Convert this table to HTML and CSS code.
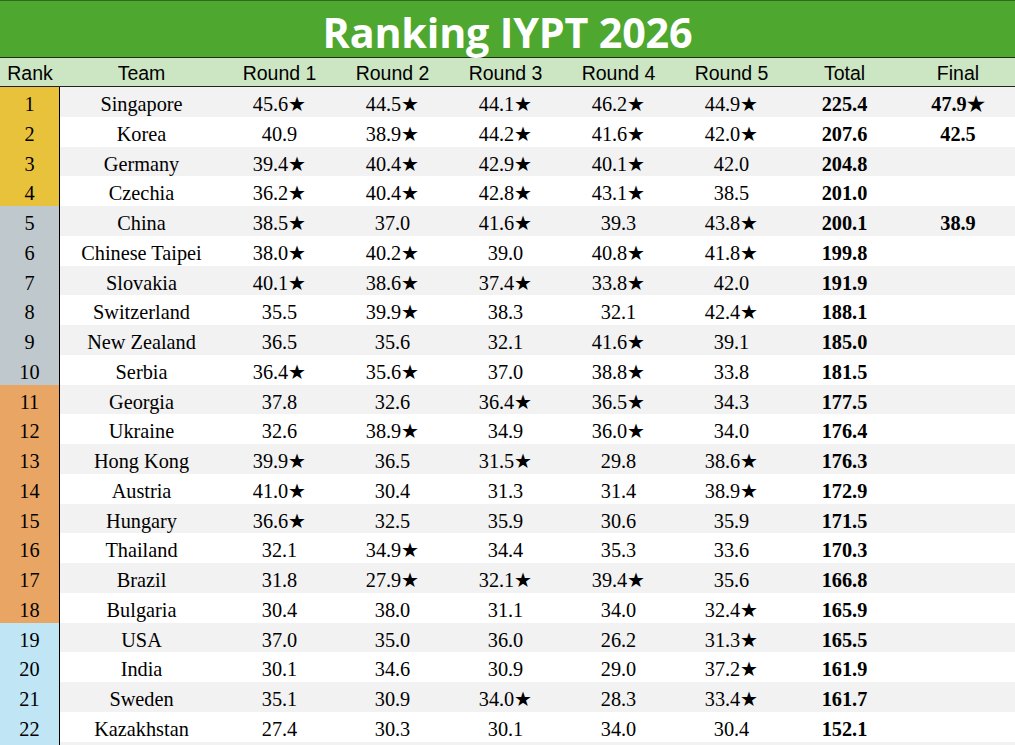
FILE: index.html
```html
<!DOCTYPE html>
<html>
<head>
<meta charset="utf-8">
<link rel="stylesheet" href="styles.css">
</head>
<body>
<div class="sheet">
  <div class="title">Ranking IYPT 2026</div>
  <div class="row head">
    <div>Rank</div><div>Team</div><div>Round 1</div><div>Round 2</div><div>Round 3</div><div>Round 4</div><div>Round 5</div><div>Total</div><div>Final</div>
  </div>
  <div class="row odd"><div class="rank gold">1</div><div>Singapore</div><div>45.6★</div><div>44.5★</div><div>44.1★</div><div>46.2★</div><div>44.9★</div><div class="b">225.4</div><div class="b">47.9★</div></div>
  <div class="row"><div class="rank gold">2</div><div>Korea</div><div>40.9</div><div>38.9★</div><div>44.2★</div><div>41.6★</div><div>42.0★</div><div class="b">207.6</div><div class="b">42.5</div></div>
  <div class="row odd"><div class="rank gold">3</div><div>Germany</div><div>39.4★</div><div>40.4★</div><div>42.9★</div><div>40.1★</div><div>42.0</div><div class="b">204.8</div><div class="b"></div></div>
  <div class="row"><div class="rank gold">4</div><div>Czechia</div><div>36.2★</div><div>40.4★</div><div>42.8★</div><div>43.1★</div><div>38.5</div><div class="b">201.0</div><div class="b"></div></div>
  <div class="row odd"><div class="rank silver">5</div><div>China</div><div>38.5★</div><div>37.0</div><div>41.6★</div><div>39.3</div><div>43.8★</div><div class="b">200.1</div><div class="b">38.9</div></div>
  <div class="row"><div class="rank silver">6</div><div>Chinese Taipei</div><div>38.0★</div><div>40.2★</div><div>39.0</div><div>40.8★</div><div>41.8★</div><div class="b">199.8</div><div class="b"></div></div>
  <div class="row odd"><div class="rank silver">7</div><div>Slovakia</div><div>40.1★</div><div>38.6★</div><div>37.4★</div><div>33.8★</div><div>42.0</div><div class="b">191.9</div><div class="b"></div></div>
  <div class="row"><div class="rank silver">8</div><div>Switzerland</div><div>35.5</div><div>39.9★</div><div>38.3</div><div>32.1</div><div>42.4★</div><div class="b">188.1</div><div class="b"></div></div>
  <div class="row odd"><div class="rank silver">9</div><div>New Zealand</div><div>36.5</div><div>35.6</div><div>32.1</div><div>41.6★</div><div>39.1</div><div class="b">185.0</div><div class="b"></div></div>
  <div class="row"><div class="rank silver">10</div><div>Serbia</div><div>36.4★</div><div>35.6★</div><div>37.0</div><div>38.8★</div><div>33.8</div><div class="b">181.5</div><div class="b"></div></div>
  <div class="row odd"><div class="rank bronze">11</div><div>Georgia</div><div>37.8</div><div>32.6</div><div>36.4★</div><div>36.5★</div><div>34.3</div><div class="b">177.5</div><div class="b"></div></div>
  <div class="row"><div class="rank bronze">12</div><div>Ukraine</div><div>32.6</div><div>38.9★</div><div>34.9</div><div>36.0★</div><div>34.0</div><div class="b">176.4</div><div class="b"></div></div>
  <div class="row odd"><div class="rank bronze">13</div><div>Hong Kong</div><div>39.9★</div><div>36.5</div><div>31.5★</div><div>29.8</div><div>38.6★</div><div class="b">176.3</div><div class="b"></div></div>
  <div class="row"><div class="rank bronze">14</div><div>Austria</div><div>41.0★</div><div>30.4</div><div>31.3</div><div>31.4</div><div>38.9★</div><div class="b">172.9</div><div class="b"></div></div>
  <div class="row odd"><div class="rank bronze">15</div><div>Hungary</div><div>36.6★</div><div>32.5</div><div>35.9</div><div>30.6</div><div>35.9</div><div class="b">171.5</div><div class="b"></div></div>
  <div class="row"><div class="rank bronze">16</div><div>Thailand</div><div>32.1</div><div>34.9★</div><div>34.4</div><div>35.3</div><div>33.6</div><div class="b">170.3</div><div class="b"></div></div>
  <div class="row odd"><div class="rank bronze">17</div><div>Brazil</div><div>31.8</div><div>27.9★</div><div>32.1★</div><div>39.4★</div><div>35.6</div><div class="b">166.8</div><div class="b"></div></div>
  <div class="row"><div class="rank bronze">18</div><div>Bulgaria</div><div>30.4</div><div>38.0</div><div>31.1</div><div>34.0</div><div>32.4★</div><div class="b">165.9</div><div class="b"></div></div>
  <div class="row odd"><div class="rank blue">19</div><div>USA</div><div>37.0</div><div>35.0</div><div>36.0</div><div>26.2</div><div>31.3★</div><div class="b">165.5</div><div class="b"></div></div>
  <div class="row"><div class="rank blue">20</div><div>India</div><div>30.1</div><div>34.6</div><div>30.9</div><div>29.0</div><div>37.2★</div><div class="b">161.9</div><div class="b"></div></div>
  <div class="row odd"><div class="rank blue">21</div><div>Sweden</div><div>35.1</div><div>30.9</div><div>34.0★</div><div>28.3</div><div>33.4★</div><div class="b">161.7</div><div class="b"></div></div>
  <div class="row"><div class="rank blue">22</div><div>Kazakhstan</div><div>27.4</div><div>30.3</div><div>30.1</div><div>34.0</div><div>30.4</div><div class="b">152.1</div><div class="b"></div></div>
  <div class="row odd"><div class="rank blue"></div><div></div><div></div><div></div><div></div><div></div><div></div><div></div><div></div></div>
</div>
</body>
</html>
```
FILE: styles.css
```css
html, body {
  margin: 0;
  padding: 0;
  background: #ffffff;
  overflow: hidden;
}
.sheet {
  width: 1015px;
  height: 745px;
  overflow: hidden;
}
.title {
  height: 56px;
  background: #4ea72e;
  border-top: 1px solid #2f6a1c;
  border-bottom: 1px solid #1b2f13;
  color: #ffffff;
  font-family: "Open Sans", "Liberation Sans", sans-serif;
  font-weight: 700;
  font-size: 41.3px;
  line-height: 62px;
  text-align: center;
  letter-spacing: -0.2px;
}
.row {
  display: grid;
  grid-template-columns: 60px 163px repeat(6, 113px) 1fr;
  height: 29.75px;
  font-family: "Liberation Serif", "Times New Roman", serif;
  font-size: 20.3px;
  color: #000;
}
.row > div {
  text-align: center;
  white-space: nowrap;
  padding-top: 6px;
  line-height: 23.75px;
  height: 29.75px;
  box-sizing: border-box;
}
.row.odd {
  background: #f2f2f2;
}
.row.head {
  height: 29px;
  background: #cce6c3;
  border-bottom: 1px solid #222;
  font-family: "Liberation Sans", Arial, sans-serif;
  font-size: 19.5px;
  box-sizing: border-box;
}
.row.head > div {
  height: 28px;
  padding-top: 4px;
  line-height: 23px;
}
.rank {
  border-right: 1.5px solid #000;
}
.b {
  font-weight: 700;
}
.gold { background: #e9c23c; }
.silver { background: #bfc8cc; }
.bronze { background: #e9a564; }
.blue { background: #c0e5f5; }
```
